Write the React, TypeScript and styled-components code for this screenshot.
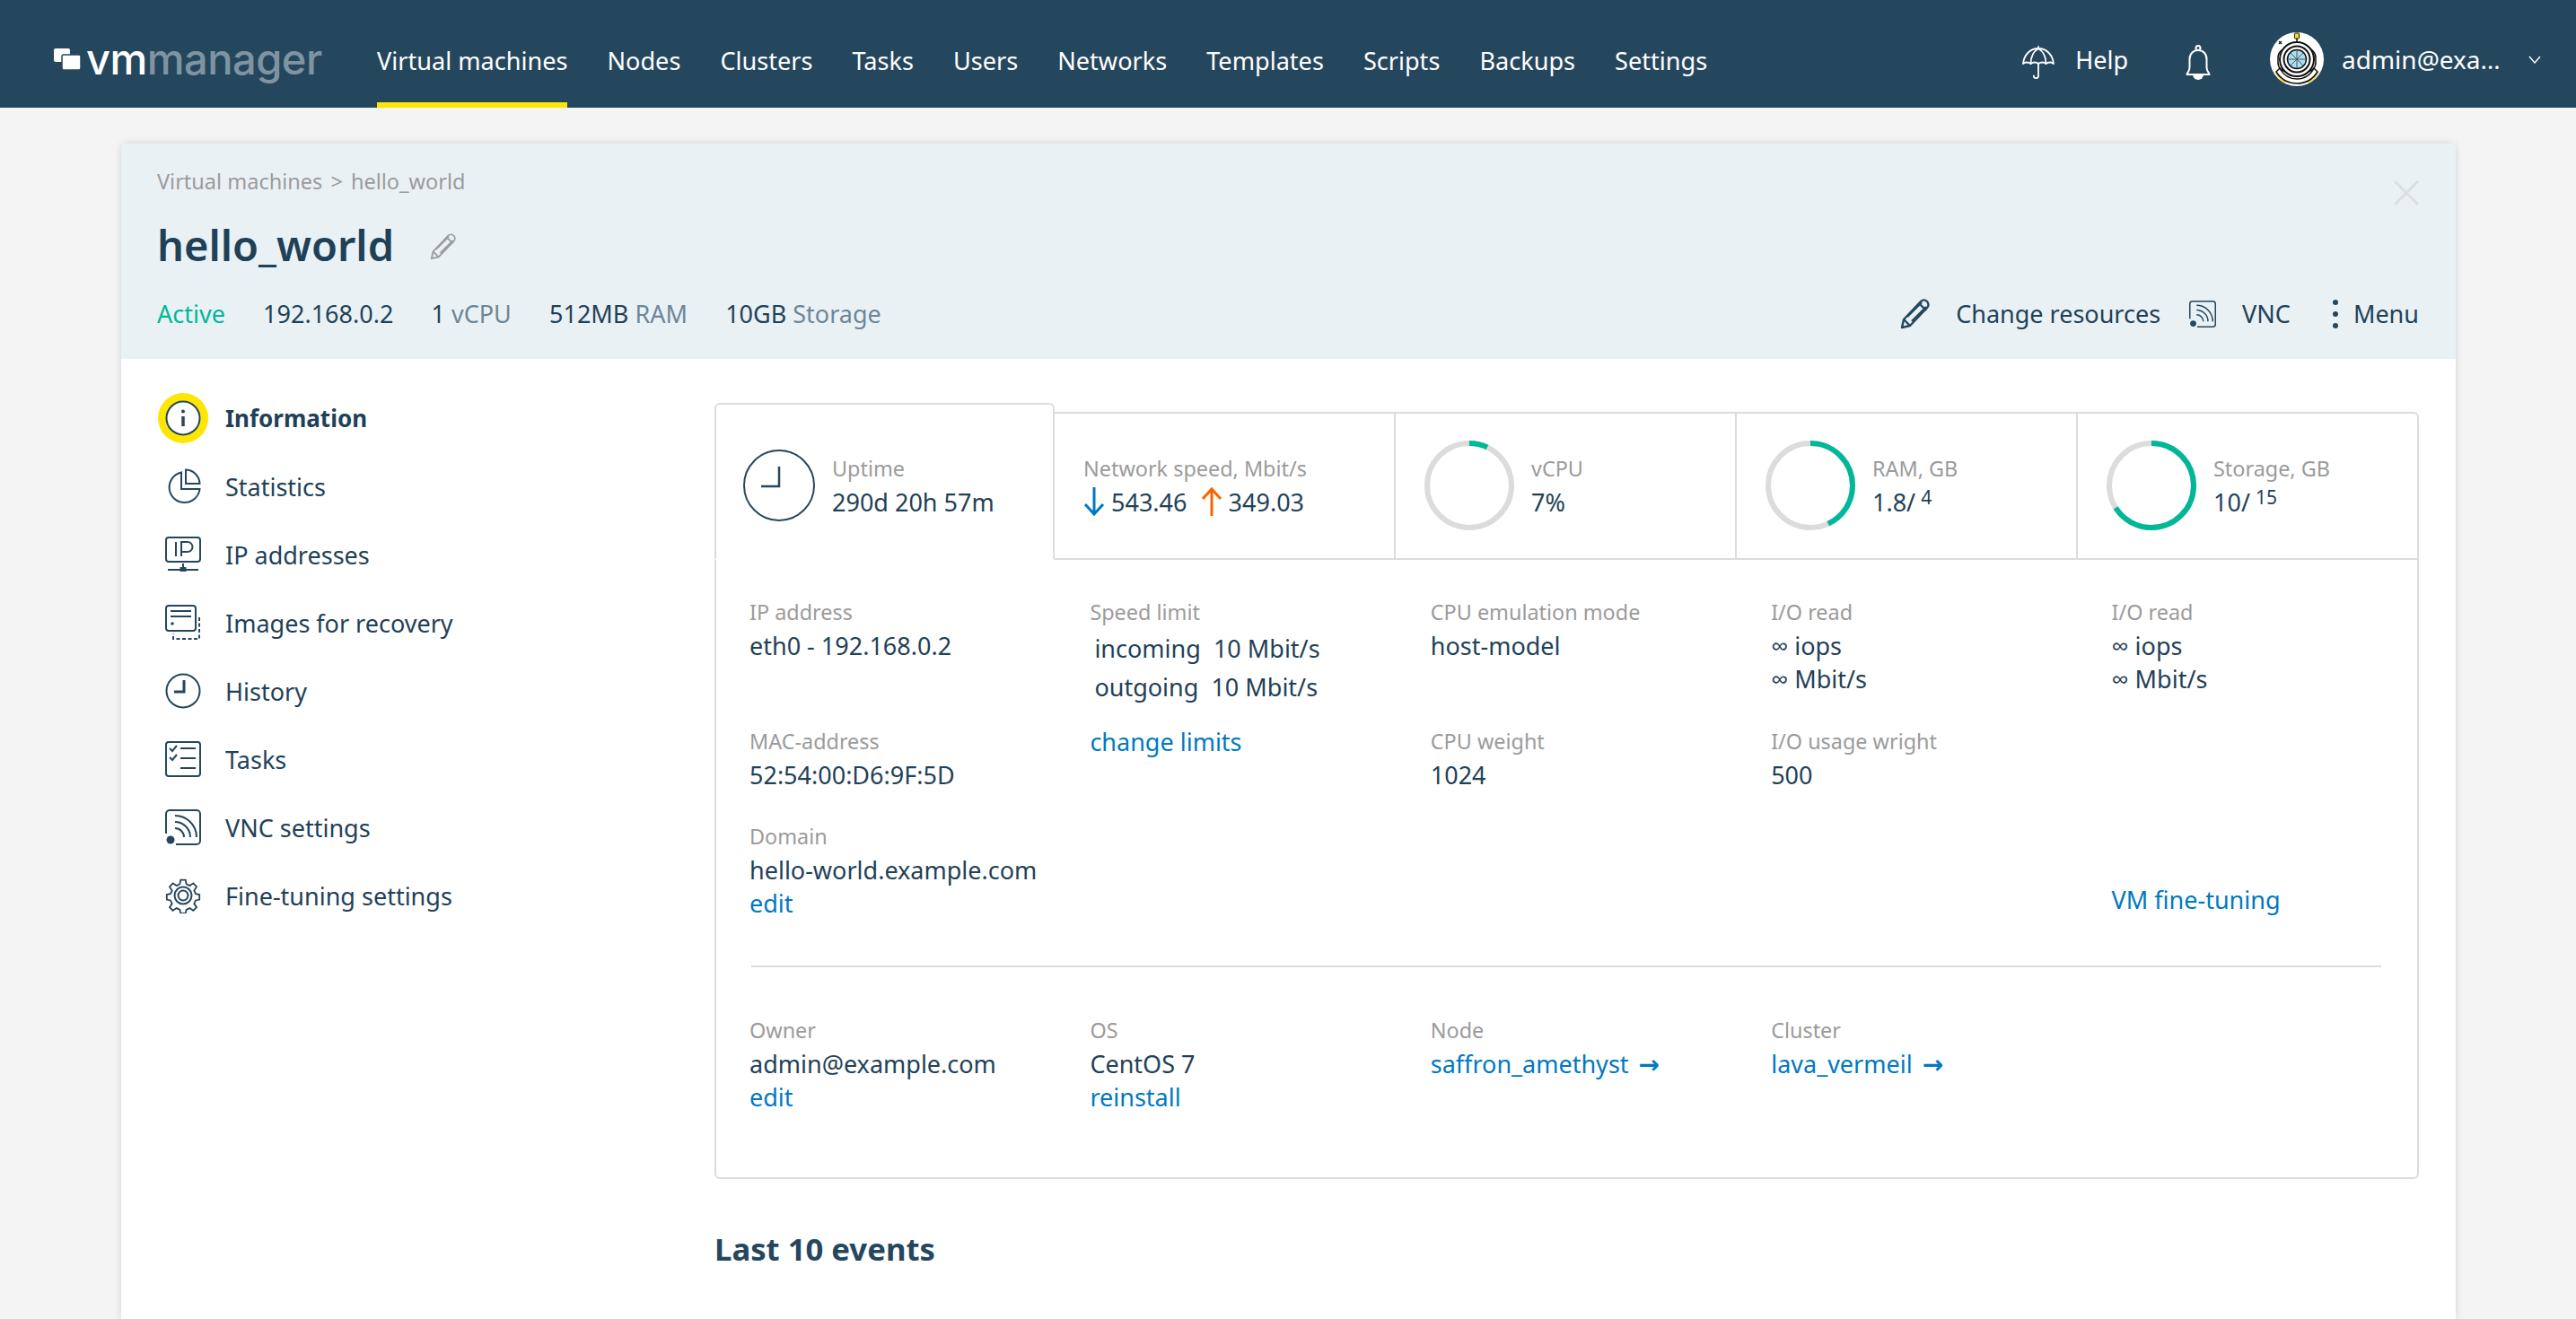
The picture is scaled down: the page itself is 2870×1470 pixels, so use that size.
import styled, { createGlobalStyle } from 'styled-components';

const navItems = ['Virtual machines', 'Nodes', 'Clusters', 'Tasks', 'Users', 'Networks', 'Templates', 'Scripts', 'Backups', 'Settings'];

const GlobalStyle = createGlobalStyle`
  html, body {
    margin: 0;
    padding: 0;
    background: #f4f4f4;
  }
  body {
    font-family: "Noto Sans", "Open Sans", sans-serif;
    font-size: 27px;
    color: #1f4158;
  }
  * {
    box-sizing: border-box;
  }
`;

function Ring({ percent }: { percent: number }) {
  const r = 47;
  const c = 2 * Math.PI * r;
  return (
    <RingSvg viewBox="0 0 100 100">
      <circle cx="50" cy="50" r={r} fill="none" stroke="#dcdcdc" strokeWidth="6" />
      <circle
        cx="50"
        cy="50"
        r={r}
        fill="none"
        stroke="#00b897"
        strokeWidth="6"
        strokeDasharray={`${(c * percent) / 100} ${c}`}
        transform="rotate(-90 50 50)"
      />
    </RingSvg>
  );
}

const InfoIcon = () => (
  <IconSvg viewBox="0 0 40 40">
    <circle cx="20" cy="20" r="18.5" fill="#fff" />
    <circle cx="20" cy="12.5" r="2" fill="#25475e" stroke="none" />
    <path d="M20 18v11" strokeWidth="3.5" />
  </IconSvg>
);

const StatsIcon = () => (
  <IconSvg viewBox="0 0 40 40">
    <path d="M18 4.5A17 17 0 1 0 38.5 23H18Z" />
    <path d="M23 1.5A16 16 0 0 1 38.5 17H23Z" />
  </IconSvg>
);

const IpIcon = () => (
  <IconSvg viewBox="0 0 40 40">
    <rect x="1" y="1" width="38" height="27" rx="3" />
    <path d="M12 6v16M18 22V6h7a5.500 5.500 0 0 1 0 11h-7" />
    <path d="M3 37h34M20 30v7" />
    <rect x="16.500" y="34" width="7" height="5" fill="#25475e" stroke="none" />
  </IconSvg>
);

const ImagesIcon = () => (
  <IconSvg viewBox="0 0 40 40">
    <rect x="1" y="1" width="33" height="28" rx="3" />
    <path d="M6 7h23M6 13h23" />
    <circle cx="8" cy="21" r="1.800" fill="#25475e" stroke="none" />
    <path d="M38 14v24H9v-6" strokeDasharray="4 2.500" />
  </IconSvg>
);

const HistoryIcon = () => (
  <IconSvg viewBox="0 0 40 40">
    <circle cx="20" cy="20" r="18.500" />
    <path d="M21 8v13H10" strokeWidth="3" />
  </IconSvg>
);

const TasksIcon = () => (
  <IconSvg viewBox="0 0 40 40">
    <rect x="1" y="1" width="38" height="38" rx="3" />
    <path d="M5 8l3 3 5-6M5 18l3 3 5-6" />
    <path d="M17 8h17M17 19h17M17 30h17" />
  </IconSvg>
);

const VncIcon = () => (
  <IconSvg viewBox="0 0 40 40">
    <path d="M1 27V5a4 4 0 0 1 4-4h30a4 4 0 0 1 4 4v30a4 4 0 0 1-4 4H12" />
    <path d="M11 21a10 10 0 0 1 10 10M11 14a17 17 0 0 1 17 17M11 7a24 24 0 0 1 24 24" />
    <circle cx="6" cy="34" r="4.500" fill="#25475e" stroke="none" />
  </IconSvg>
);

const GearIcon = () => (
  <IconSvg viewBox="0 0 40 40">
    <path d="M17 1h6l1 5 4 2 4.500-3 4 4.500-3 4.500 2 4 4.500 1v6l-4.500 1-2 4 3 4.500-4 4-4.500-3-4 2-1 4.500h-6l-1-4.500-4-2-4.500 3-4-4 3-4.500-2-4-4.500-1v-6l4.500-1 2-4-3-4.500 4-4.500 4.500 3 4-2Z" transform="translate(1.800 1.800) scale(.91)" />
    <circle cx="20" cy="20" r="9.500" />
    <circle cx="20" cy="20" r="5.500" />
  </IconSvg>
);

const sideItems = [
  { label: 'Information', icon: <InfoIcon />, active: true },
  { label: 'Statistics', icon: <StatsIcon /> },
  { label: 'IP addresses', icon: <IpIcon /> },
  { label: 'Images for recovery', icon: <ImagesIcon /> },
  { label: 'History', icon: <HistoryIcon /> },
  { label: 'Tasks', icon: <TasksIcon /> },
  { label: 'VNC settings', icon: <VncIcon /> },
  { label: 'Fine-tuning settings', icon: <GearIcon /> },
];

export default function App() {
  return (
    <Page>
      <GlobalStyle />
      <Header>
        <Logo>
          <LogoMark viewBox="0 0 30 24">
            <rect x="0" y="0" width="18" height="15" rx="2" fill="#fff" />
            <rect x="9" y="7" width="21" height="17" rx="2" fill="#fff" stroke="#25475e" strokeWidth="1.500" />
          </LogoMark>
          <LogoText>
            vm<LogoDim>manager</LogoDim>
          </LogoText>
        </Logo>
        <Nav>
          {navItems.map((item, i) => (
            <NavItem key={item} $active={i === 0}>
              {item}
            </NavItem>
          ))}
        </Nav>
        <HeaderRight>
          <HelpLink>
            <HeaderIcon width="36" height="38" viewBox="0 0 36 38" fill="none" stroke="#fff" strokeWidth="1.800" strokeLinecap="round" strokeLinejoin="round">
              <path d="M18 1v2M1 20C2 10 9 3 18 3s16 7 17 17c-2-2-6-2-8.500 0-2-2-6-2-8.500 0-2-2-6-2-8.500 0-2.500-2-6.500-2-8.500 0Z" />
              <path d="M18 3c-5 3-8.500 9-8.500 17M18 3c5 3 8.500 9 8.500 17" />
              <path d="M18 20v13.500a2.600 2.600 0 0 1-5.200 0" />
            </HeaderIcon>
            Help
          </HelpLink>
          <HeaderIcon width="28" height="40" viewBox="0 0 28 40" fill="none" stroke="#fff" strokeWidth="2" strokeLinejoin="round">
            <circle cx="14" cy="3.500" r="2.500" />
            <path d="M1.500 33c0-2 3-3 3-8V16c0-6 4-10 9.500-10s9.500 4 9.500 10v9c0 5 3 6 3 8Z" />
            <path d="M8 33h12a6 6 0 0 1-12 0Z" fill="#fff" stroke="none" />
          </HeaderIcon>
          <UserBox>
            <svg width="60" height="60" viewBox="0 0 60 60">
              <circle cx="30" cy="30" r="30" fill="#fff" />
              <path d="M5 44c3 6 7 10 12 13l3-5c-4-2-7-6-9-10Z" fill="#f7d84a" />
              <path d="M55 44c-3 6-7 10-12 13l-3-5c4-2 7-6 9-10Z" fill="#f7d84a" />
              <path d="M30 3v8" stroke="#111" strokeWidth="1.500" />
              <rect x="27.500" y="1" width="5" height="6" rx="1" fill="#ffe100" stroke="#111" strokeWidth="1" />
              <rect x="9" y="18" width="42" height="26" rx="10" fill="#fff" stroke="#111" strokeWidth="1.500" />
              <path d="M11 40c4 8 11 12 19 12s15-4 19-12l4 4c-5 8-13 13-23 13S12 52 7 44Z" fill="#fff" stroke="#111" strokeWidth="1.500" />
              <circle cx="30" cy="30" r="19" fill="#fff" stroke="#111" strokeWidth="2" />
              <circle cx="30" cy="30" r="14.500" fill="#fff" stroke="#111" strokeWidth="2" />
              <circle cx="30" cy="30" r="10.500" fill="#a7dff5" stroke="#111" strokeWidth="1.500" />
              <path d="M23 23l14 14M37 23L23 37M30 20v20M20 30h20" stroke="#555" strokeWidth="1" />
              <path d="M10 10l3 3M13 10l-3 3" stroke="#111" strokeWidth="1.200" />
            </svg>
            <UserName>admin@exa…</UserName>
            <svg width="14" height="9" viewBox="0 0 14 9" fill="none" stroke="#fff" strokeWidth="1.400">
              <path d="M1 1l6 7 6-7" />
            </svg>
          </UserBox>
        </HeaderRight>
      </Header>

      <Card>
        <CardHead>
          <CloseBtn>
            <svg width="28" height="28" viewBox="0 0 28 28" stroke="#dcdfe1" strokeWidth="3">
              <path d="M1 1l26 26M27 1L1 27" />
            </svg>
          </CloseBtn>
          <Breadcrumb>
            Virtual machines <CrumbSep>&gt;</CrumbSep> hello_world
          </Breadcrumb>
          <TitleRow>
            <Title>hello_world</Title>
            <TitlePencil width="30" height="30" viewBox="0 0 34 34" fill="none" stroke="#9b9b9b" strokeWidth="2" strokeLinejoin="round">
              <path d="M2 32l2-9L23 3c2-2 5-2 7 0s2 5 0 7L11 30Z" />
              <path d="M4 23l7 7M21 5l8 8M8 20L24 4M13 25L29 9" />
            </TitlePencil>
          </TitleRow>
          <StatusRow>
            <StatusList>
              <ActiveText>Active</ActiveText>
              <span>192.168.0.2</span>
              <span>
                1 <Dim>vCPU</Dim>
              </span>
              <span>
                512MB <Dim>RAM</Dim>
              </span>
              <span>
                10GB <Dim>Storage</Dim>
              </span>
            </StatusList>
            <Actions>
              <ActionItem $gap={28}>
                <svg width="34" height="34" viewBox="0 0 34 34" fill="none" stroke="#25475e" strokeWidth="2.400" strokeLinejoin="round">
                  <path d="M2 32l2-9L23 3c2-2 5-2 7 0s2 5 0 7L11 30Z" />
                  <path d="M4 23l7 7M21 5l8 8M8 20L24 4M13 25L29 9" />
                </svg>
                Change resources
              </ActionItem>
              <ActionItem $gap={29}>
                <SmallVnc>
                  <VncIcon />
                </SmallVnc>
                VNC
              </ActionItem>
              <MenuAction $gap={16}>
                <svg width="8" height="34" viewBox="0 0 8 34" fill="#25475e">
                  <circle cx="4" cy="4" r="3" />
                  <circle cx="4" cy="17" r="3" />
                  <circle cx="4" cy="30" r="3" />
                </svg>
                Menu
              </MenuAction>
            </Actions>
          </StatusRow>
        </CardHead>

        <CardBody>
          <SideNav>
            {sideItems.map((item) => (
              <SideRow key={item.label} $active={item.active}>
                <SideIcon $active={item.active}>{item.icon}</SideIcon>
                {item.label}
              </SideRow>
            ))}
          </SideNav>

          <Main>
            <Tabs>
              <ActiveTab>
                <svg width="80" height="80" viewBox="0 0 80 80" fill="none" stroke="#25475e">
                  <circle cx="40" cy="40" r="39" strokeWidth="2" />
                  <path d="M40 19v22H20" strokeWidth="2.500" />
                </svg>
                <TabText>
                  <Label>Uptime</Label>
                  <Value>290d 20h 57m</Value>
                </TabText>
              </ActiveTab>
              <Tab>
                <TabText>
                  <Label>Network speed, Mbit/s</Label>
                  <Value>
                    <svg width="24" height="32" viewBox="0 0 24 32" fill="none" stroke="#0079c1" strokeWidth="3">
                      <path d="M12 0v30M2 19l10 11 10-11" />
                    </svg>{' '}
                    543.46{' '}
                    <UpArrow width="24" height="32" viewBox="0 0 24 32" fill="none" stroke="#f56600" strokeWidth="3">
                      <path d="M12 32V2M2 13L12 2l10 11" />
                    </UpArrow>{' '}
                    349.03
                  </Value>
                </TabText>
              </Tab>
              <Tab>
                <Ring percent={7} />
                <TabText>
                  <Label>vCPU</Label>
                  <Value>7%</Value>
                </TabText>
              </Tab>
              <Tab>
                <Ring percent={43} />
                <TabText>
                  <Label>RAM, GB</Label>
                  <Value>
                    1.8/<Sup>4</Sup>
                  </Value>
                </TabText>
              </Tab>
              <LastTab>
                <Ring percent={66} />
                <TabText>
                  <Label>Storage, GB</Label>
                  <Value>
                    10/<Sup>15</Sup>
                  </Value>
                </TabText>
              </LastTab>
            </Tabs>

            <Panel>
              <DetailGrid>
                <Field>
                  <Label>IP address</Label>
                  <Value>eth0 - 192.168.0.2</Value>
                </Field>
                <Field>
                  <Label>Speed limit</Label>
                  <SpeedLine>incoming&nbsp; 10 Mbit/s</SpeedLine>
                  <SpeedLine>outgoing&nbsp; 10 Mbit/s</SpeedLine>
                </Field>
                <Field>
                  <Label>CPU emulation mode</Label>
                  <Value>host-model</Value>
                </Field>
                <Field>
                  <Label>I/O read</Label>
                  <Value>∞ iops</Value>
                  <Value>∞ Mbit/s</Value>
                </Field>
                <Field>
                  <Label>I/O read</Label>
                  <Value>∞ iops</Value>
                  <Value>∞ Mbit/s</Value>
                </Field>

                <Field>
                  <Label>MAC-address</Label>
                  <Value>52:54:00:D6:9F:5D</Value>
                </Field>
                <Field>
                  <LinkText>change limits</LinkText>
                </Field>
                <Field>
                  <Label>CPU weight</Label>
                  <Value>1024</Value>
                </Field>
                <Field>
                  <Label>I/O usage wright</Label>
                  <Value>500</Value>
                </Field>
                <Field />

                <Field>
                  <Label>Domain</Label>
                  <Value>hello-world.example.com</Value>
                  <LinkText>edit</LinkText>
                </Field>
                <Field />
                <Field />
                <Field />
                <BottomField>
                  <LinkText>VM fine-tuning</LinkText>
                </BottomField>
              </DetailGrid>

              <Divider />

              <OwnerGrid>
                <Field>
                  <Label>Owner</Label>
                  <Value>admin@example.com</Value>
                  <LinkText>edit</LinkText>
                </Field>
                <Field>
                  <Label>OS</Label>
                  <Value>CentOS 7</Value>
                  <LinkText>reinstall</LinkText>
                </Field>
                <Field>
                  <Label>Node</Label>
                  <LinkText>
                    saffron_amethyst <ArrowGlyph>→</ArrowGlyph>
                  </LinkText>
                </Field>
                <Field>
                  <Label>Cluster</Label>
                  <LinkText>
                    lava_vermeil <ArrowGlyph>→</ArrowGlyph>
                  </LinkText>
                </Field>
              </OwnerGrid>
            </Panel>

            <EventsTitle>Last 10 events</EventsTitle>
          </Main>
        </CardBody>
      </Card>
    </Page>
  );
}

const Page = styled.div`
  height: 1470px;
  display: flex;
  flex-direction: column;
  overflow: hidden;
`;

const Header = styled.header`
  height: 120px;
  flex: none;
  background: #25475e;
  color: #fff;
  display: flex;
  align-items: center;
  padding: 0 39px 0 60px;
`;

const Logo = styled.div`
  width: 360px;
  display: flex;
  align-items: center;
  gap: 6px;
  padding-top: 12px;
`;

const LogoMark = styled.svg`
  width: 30px;
  height: 24px;
  flex: none;
`;

const LogoText = styled.span`
  font-family: Inter, sans-serif;
  font-size: 47px;
  font-weight: 500;
  letter-spacing: -0.5px;
  line-height: 60px;
  color: #fff;
`;

const LogoDim = styled.span`
  color: #7f94a3;
`;

const Nav = styled.nav`
  display: flex;
  height: 120px;
  gap: 44px;
  flex: 1;
`;

const NavItem = styled.a<{ $active?: boolean }>`
  display: flex;
  align-items: center;
  font-size: 27.100px;
  padding-top: 20px;
  border-bottom: 6px solid ${({ $active }) => ($active ? '#ffe600' : 'transparent')};
`;

const HeaderRight = styled.div`
  display: flex;
  align-items: center;
  padding-top: 12px;
`;

const HeaderIcon = styled.svg`
  margin-top: 8px;
`;

const HelpLink = styled.a`
  display: flex;
  align-items: center;
  gap: 23px;
  font-size: 27px;
  margin-right: 64px;
`;

const UserBox = styled.div`
  display: flex;
  align-items: center;
  margin-left: 66px;
`;

const UserName = styled.span`
  width: 178px;
  margin: 0 30px 0 20px;
  font-size: 28px;
  white-space: nowrap;
`;

const Card = styled.main`
  flex: 1;
  width: 2601px;
  margin: 40px 0 0 135px;
  background: #fff;
  border-radius: 6px 6px 0 0;
  box-shadow: 0 0 8px rgba(0, 0, 0, 0.14);
`;

const CardHead = styled.div`
  position: relative;
  height: 240px;
  padding: 24px 41px 0 40px;
  background: #eaf1f5;
  border-radius: 6px 6px 0 0;
`;

const CloseBtn = styled.span`
  position: absolute;
  right: 41px;
  top: 40px;
`;

const Breadcrumb = styled.div`
  font-size: 23.500px;
  line-height: 36px;
  color: #9b9b9b;
`;

const CrumbSep = styled.span`
  margin: 0 3px;
`;

const TitleRow = styled.div`
  display: flex;
  align-items: center;
  gap: 40px;
  margin-top: 19px;
`;

const Title = styled.h1`
  margin: 0;
  font-size: 47px;
  font-weight: 600;
  line-height: 68px;
  color: #1f4158;
`;

const TitlePencil = styled.svg`
  margin-top: 3px;
`;

const StatusRow = styled.div`
  display: flex;
  justify-content: space-between;
  align-items: center;
  margin-top: 23px;
  line-height: 40px;
`;

const StatusList = styled.div`
  display: flex;
  gap: 42.200px;
`;

const ActiveText = styled.span`
  color: #00b897;
`;

const Dim = styled.span`
  color: #6d8698;
`;

const Actions = styled.div`
  display: flex;
  align-items: center;
  gap: 32px;
`;

const ActionItem = styled.span<{ $gap: number }>`
  display: flex;
  align-items: center;
  gap: ${({ $gap }) => $gap}px;
`;

const MenuAction = styled(ActionItem)`
  margin-left: 14px;
`;

const SmallVnc = styled.span`
  display: flex;
  width: 30px;
  height: 30px;
`;

const CardBody = styled.div`
  display: flex;
  padding: 0 41px 0 40px;
`;

const SideNav = styled.aside`
  width: 621px;
  flex: none;
  padding: 28px 0 0 1px;
`;

const SideRow = styled.div<{ $active?: boolean }>`
  height: 76px;
  display: flex;
  align-items: center;
  gap: 19px;
  font-size: ${({ $active }) => ($active ? 26 : 27)}px;
  font-weight: ${({ $active }) => ($active ? 700 : 400)};
`;

const SideIcon = styled.span<{ $active?: boolean }>`
  width: 56px;
  height: 56px;
  flex: none;
  display: flex;
  align-items: center;
  justify-content: center;
  border-radius: 50%;
  background: ${({ $active }) => ($active ? '#ffe600' : 'transparent')};
`;

const IconSvg = styled.svg`
  width: 100%;
  max-width: 40px;
  height: auto;
  fill: none;
  stroke: #25475e;
  stroke-width: 2;
  display: block;
`;

const Main = styled.section`
  flex: 1;
  min-width: 0;
  padding-top: 49px;
`;

const Tabs = styled.div`
  display: flex;
  align-items: flex-end;
  position: relative;
  z-index: 1;
`;

const Tab = styled.div`
  width: 380px;
  height: 165px;
  display: flex;
  align-items: center;
  gap: 19px;
  padding: 0 32px 2px;
  border: 2px solid #dcdcdc;
  border-left: 0;
`;

const ActiveTab = styled(Tab)`
  width: 379px;
  height: 175px;
  padding-top: 10px;
  border-left: 2px solid #dcdcdc;
  border-bottom: 2px solid #fff;
  border-radius: 6px 6px 0 0;
  padding-left: 30px;
`;

const LastTab = styled(Tab)`
  border-radius: 0 6px 0 0;
`;

const RingSvg = styled.svg`
  width: 100px;
  height: 100px;
  flex: none;
`;

const TabText = styled.div`
  display: flex;
  flex-direction: column;
  min-width: 0;
`;

const Label = styled.div`
  font-size: 23.400px;
  line-height: 37px;
  color: #9b9b9b;
  white-space: nowrap;
`;

const Value = styled.div`
  font-size: 27px;
  line-height: 37px;
  white-space: nowrap;
  display: block;

  svg {
    vertical-align: -5px;
  }
`;

const UpArrow = styled.svg`
  margin-left: 8px;
`;

const Sup = styled.sup`
  font-size: 21px;
  line-height: 0;
  vertical-align: 8px;
  margin-left: 6px;
`;

const Panel = styled.div`
  margin-top: -2px;
  height: 692px;
  padding: 40px 0 0 37px;
  border: 2px solid #dcdcdc;
  border-radius: 0 0 6px 6px;
`;

const DetailGrid = styled.div`
  display: grid;
  grid-template-columns: repeat(5, 379.400px);
  grid-template-rows: 144px 106px 111px;
`;

const OwnerGrid = styled.div`
  display: grid;
  grid-template-columns: repeat(5, 379.400px);
  margin-top: 52px;
`;

const Field = styled.div`
  min-width: 0;
`;

const BottomField = styled(Field)`
  align-self: end;
  padding-bottom: 4px;
`;

const SpeedLine = styled.div`
  padding-left: 5px;
  line-height: 43px;
  white-space: nowrap;
`;

const LinkText = styled.a`
  display: block;
  line-height: 37px;
  color: #0079c1;
  white-space: nowrap;
`;

const ArrowGlyph = styled.span`
  font-family: "DejaVu Sans", sans-serif;
  font-weight: 700;
  font-size: 28px;
  margin-left: 4px;
`;

const Divider = styled.div`
  height: 2px;
  margin-top: 51px;
  background: #dcdcdc;
  width: 1816px;
  margin-left: 2px;
`;

const EventsTitle = styled.h2`
  margin: 56px 0 0;
  font-size: 34.700px;
  font-weight: 700;
  line-height: 44px;
  color: #25475e;
`;
